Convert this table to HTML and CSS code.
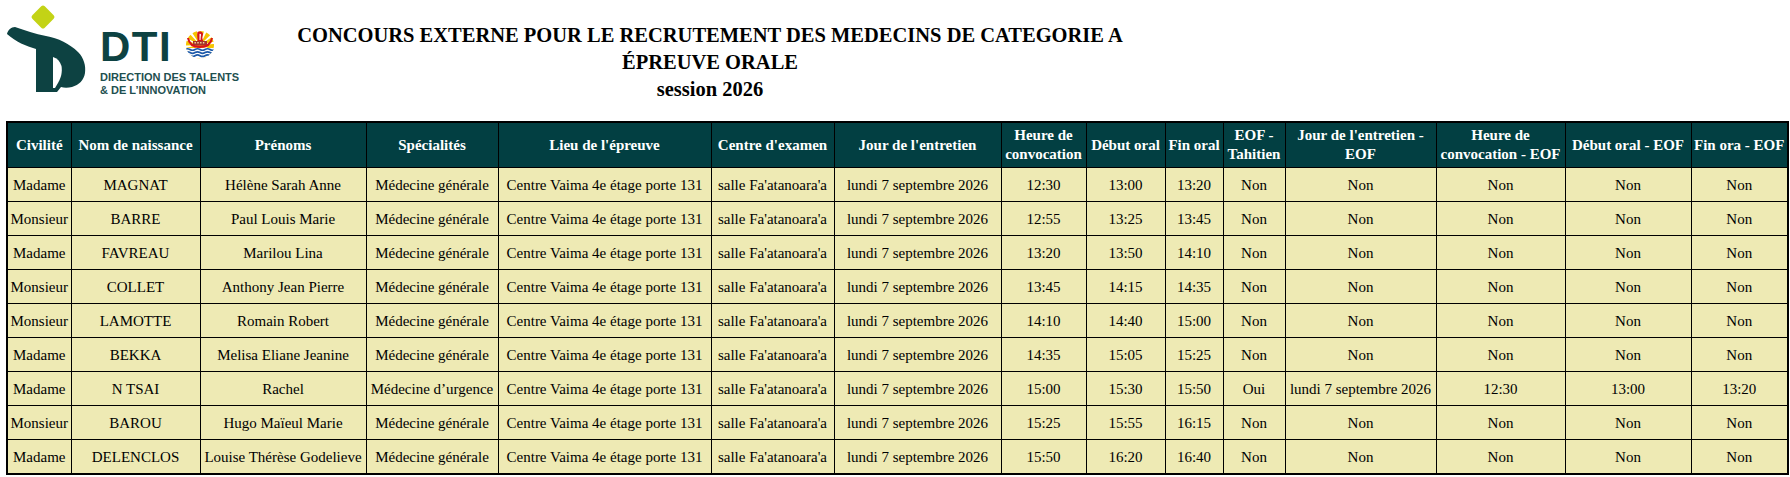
FILE: index.html
```html
<!DOCTYPE html>
<html lang="fr">
<head>
<meta charset="utf-8">
<title>Concours externe - Médecins de catégorie A</title>
<link rel="stylesheet" href="styles.css">
</head>
<body>
<header class="top">
  <div class="brand">
    <svg class="mark" viewBox="0 0 92 100" width="92" height="100" aria-hidden="true">
      <rect x="34.2" y="8.2" width="17.6" height="17.6" rx="2.5" transform="rotate(45 43 17)" fill="#C3D316"/>
      <path d="M7 34 C8 30 11 27 15 27 C25 30 35 34 46 36 C58 38 70 44 78 52 C84 58 86 66 85 73 C84 80 79 85 72 87 C68 88 64 88 61 87 L57 92 L36 92 L36 49 C26 46 16 42 7 34 Z" fill="#0D4242"/>
      <path d="M53 57 C57 58 60 61 61.5 66 C62.5 72 61 78 58 83 L55 88 L53 88 Z" fill="#fff"/>
    </svg>
    <div class="brand-text">
      <div class="brand-row">
        <span class="dti">DTI</span>
        <svg class="emblem" viewBox="0 0 30 30" width="30" height="30" aria-hidden="true">
          <defs><clipPath id="emb"><circle cx="15" cy="15" r="14.5"/></clipPath></defs>
          <g clip-path="url(#emb)">
            <rect width="30" height="30" fill="#fff"/>
            <circle cx="15" cy="16" r="7" fill="none" stroke="#F5C400" stroke-width="14" stroke-dasharray="2.4 1.2"/>
            <circle cx="15" cy="16" r="4" fill="#F5C400"/>
            <path d="M12.5 3 C16 1.5 19.5 4 17.5 7 C16.8 9 18 11 18.5 13 L12.5 13 C13 10 11.5 6 12.5 3 Z" fill="#D7141A"/>
            <path d="M14.5 5 C15.5 4.5 16.5 5.5 15.8 7 L15.5 11 L14.5 11 Z" fill="#fff"/>
            <rect x="8" y="12" width="14" height="4.5" fill="#A5342A"/>
            <g fill="#F4D7A0"><rect x="9.5" y="13" width="1.4" height="1.5"/><rect x="12.3" y="13" width="1.4" height="1.5"/><rect x="15.1" y="13" width="1.4" height="1.5"/><rect x="17.9" y="13" width="1.4" height="1.5"/></g>
            <path d="M2 9 Q3.5 19 15 19 Q26.5 19 28 9 L26 9 Q24.5 16.8 15 16.8 Q5.5 16.8 4 9 Z" fill="#D7141A"/>
            <rect x="0" y="19" width="30" height="11" fill="#fff"/>
            <g fill="none" stroke="#1E5AA8" stroke-width="1.7">
              <path d="M0 20.5 Q2.5 19 5 20.5 T10 20.5 T15 20.5 T20 20.5 T25 20.5 T30 20.5"/>
              <path d="M0 23.6 Q2.5 22.1 5 23.6 T10 23.6 T15 23.6 T20 23.6 T25 23.6 T30 23.6"/>
              <path d="M0 26.7 Q2.5 25.2 5 26.7 T10 26.7 T15 26.7 T20 26.7 T25 26.7 T30 26.7"/>
            </g>
          </g>
        </svg>
      </div>
      <div class="brand-sub">DIRECTION DES TALENTS<br>&amp; DE L’INNOVATION</div>
    </div>
  </div>
  <div class="title">
    CONCOURS EXTERNE POUR LE RECRUTEMENT DES MEDECINS DE CATEGORIE A<br>
    ÉPREUVE ORALE<br>
    session 2026
  </div>
</header>

<table class="grid">
  <colgroup>
    <col style="width:64px"><col style="width:129px"><col style="width:166px"><col style="width:132px">
    <col style="width:213px"><col style="width:123px"><col style="width:167px"><col style="width:85px">
    <col style="width:79px"><col style="width:58px"><col style="width:62px"><col style="width:151px">
    <col style="width:129px"><col style="width:126px"><col style="width:97px">
  </colgroup>
  <thead>
    <tr>
      <th>Civilité</th><th>Nom de naissance</th><th>Prénoms</th><th>Spécialités</th><th>Lieu de l'épreuve</th>
      <th>Centre d'examen</th><th>Jour de l'entretien</th><th>Heure de convocation</th><th>Début oral</th><th>Fin oral</th>
      <th>EOF - Tahitien</th><th>Jour de l'entretien - EOF</th><th>Heure de convocation - EOF</th><th>Début oral - EOF</th><th>Fin ora - EOF</th>
    </tr>
  </thead>
  <tbody>
    <tr><td>Madame</td><td>MAGNAT</td><td>Hélène Sarah Anne</td><td>Médecine générale</td><td>Centre Vaima 4e étage porte 131</td><td>salle Fa'atanoara'a</td><td>lundi 7 septembre 2026</td><td>12:30</td><td>13:00</td><td>13:20</td><td>Non</td><td>Non</td><td>Non</td><td>Non</td><td>Non</td></tr>
    <tr><td>Monsieur</td><td>BARRE</td><td>Paul Louis Marie</td><td>Médecine générale</td><td>Centre Vaima 4e étage porte 131</td><td>salle Fa'atanoara'a</td><td>lundi 7 septembre 2026</td><td>12:55</td><td>13:25</td><td>13:45</td><td>Non</td><td>Non</td><td>Non</td><td>Non</td><td>Non</td></tr>
    <tr><td>Madame</td><td>FAVREAU</td><td>Marilou Lina</td><td>Médecine générale</td><td>Centre Vaima 4e étage porte 131</td><td>salle Fa'atanoara'a</td><td>lundi 7 septembre 2026</td><td>13:20</td><td>13:50</td><td>14:10</td><td>Non</td><td>Non</td><td>Non</td><td>Non</td><td>Non</td></tr>
    <tr><td>Monsieur</td><td>COLLET</td><td>Anthony Jean Pierre</td><td>Médecine générale</td><td>Centre Vaima 4e étage porte 131</td><td>salle Fa'atanoara'a</td><td>lundi 7 septembre 2026</td><td>13:45</td><td>14:15</td><td>14:35</td><td>Non</td><td>Non</td><td>Non</td><td>Non</td><td>Non</td></tr>
    <tr><td>Monsieur</td><td>LAMOTTE</td><td>Romain Robert</td><td>Médecine générale</td><td>Centre Vaima 4e étage porte 131</td><td>salle Fa'atanoara'a</td><td>lundi 7 septembre 2026</td><td>14:10</td><td>14:40</td><td>15:00</td><td>Non</td><td>Non</td><td>Non</td><td>Non</td><td>Non</td></tr>
    <tr><td>Madame</td><td>BEKKA</td><td>Melisa Eliane Jeanine</td><td>Médecine générale</td><td>Centre Vaima 4e étage porte 131</td><td>salle Fa'atanoara'a</td><td>lundi 7 septembre 2026</td><td>14:35</td><td>15:05</td><td>15:25</td><td>Non</td><td>Non</td><td>Non</td><td>Non</td><td>Non</td></tr>
    <tr><td>Madame</td><td>N TSAI</td><td>Rachel</td><td>Médecine d’urgence</td><td>Centre Vaima 4e étage porte 131</td><td>salle Fa'atanoara'a</td><td>lundi 7 septembre 2026</td><td>15:00</td><td>15:30</td><td>15:50</td><td>Oui</td><td>lundi 7 septembre 2026</td><td>12:30</td><td>13:00</td><td>13:20</td></tr>
    <tr><td>Monsieur</td><td>BAROU</td><td>Hugo Maïeul Marie</td><td>Médecine générale</td><td>Centre Vaima 4e étage porte 131</td><td>salle Fa'atanoara'a</td><td>lundi 7 septembre 2026</td><td>15:25</td><td>15:55</td><td>16:15</td><td>Non</td><td>Non</td><td>Non</td><td>Non</td><td>Non</td></tr>
    <tr><td>Madame</td><td>DELENCLOS</td><td>Louise Thérèse Godelieve</td><td>Médecine générale</td><td>Centre Vaima 4e étage porte 131</td><td>salle Fa'atanoara'a</td><td>lundi 7 septembre 2026</td><td>15:50</td><td>16:20</td><td>16:40</td><td>Non</td><td>Non</td><td>Non</td><td>Non</td><td>Non</td></tr>
  </tbody>
</table>
</body>
</html>
```

FILE: styles.css
```css
html, body {
  margin: 0;
  padding: 0;
  background: #ffffff;
  font-family: "Liberation Serif", "Times New Roman", serif;
  color: #000;
}

.top {
  display: flex;
  height: 121px;
}

.brand {
  width: 240px;
  flex: none;
  display: flex;
}

.mark {
  flex: none;
  display: block;
}

.brand-text {
  margin-left: 8px;
  padding-top: 26px;
}

.brand-row {
  display: flex;
  align-items: flex-start;
  height: 42px;
}

.dti {
  font-family: "Liberation Sans", Arial, sans-serif;
  font-weight: bold;
  font-size: 42px;
  line-height: 42px;
  letter-spacing: 1.5px;
  color: #0D4242;
}

.emblem {
  flex: none;
  margin-left: 13px;
  margin-top: 3px;
  display: block;
}

.brand-sub {
  margin-top: 3px;
  font-family: "Liberation Sans", Arial, sans-serif;
  font-weight: bold;
  font-size: 11px;
  line-height: 13px;
  color: #1E4F4F;
  white-space: nowrap;
}

.title {
  width: 940px;
  flex: none;
  padding-top: 22px;
  text-align: center;
  font-family: "Liberation Serif", "Times New Roman", serif;
  font-weight: bold;
  font-size: 20.5px;
  line-height: 27px;
}

.grid {
  margin-left: 6px;
  width: 1781px;
  table-layout: fixed;
  border-collapse: collapse;
  border: 2px solid #000;
  font-family: "Liberation Serif", "Times New Roman", serif;
  font-size: 15px;
}

.grid th,
.grid td {
  border: 1px solid #000;
  text-align: center;
  vertical-align: middle;
  padding: 0 1px;
}

.grid th {
  background: #023F42;
  color: #ffffff;
  font-weight: bold;
  line-height: 19px;
  height: 44px;
}

.grid td {
  background: #EEEAB4;
  color: #000;
  white-space: nowrap;
  line-height: 18px;
  height: 33px;
}
```
